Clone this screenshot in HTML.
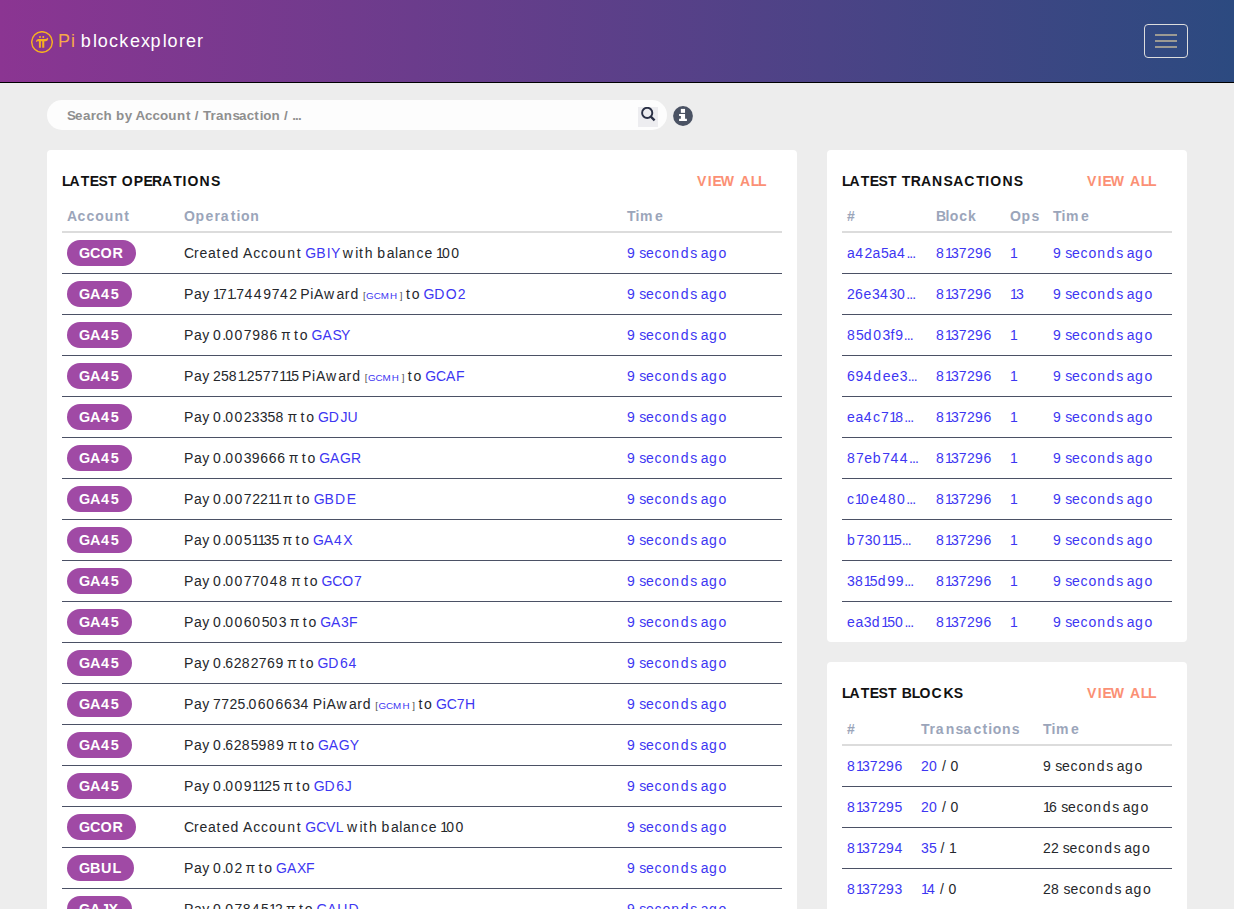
<!DOCTYPE html>
<html><head><meta charset="utf-8">
<style>
*{box-sizing:border-box;margin:0;padding:0}
html,body{width:1234px;height:909px;overflow:hidden}
body{background:#ededed;font-family:"Liberation Sans",sans-serif;color:#25272b;position:relative;font-kerning:none;letter-spacing:0}
a{color:#3d36f2;text-decoration:none}
.hdr{position:absolute;left:0;top:0;width:1234px;height:83px;background:linear-gradient(to right,#8b3592,#2c4a80);border-bottom:1px solid #000}
.logo{position:absolute;left:31px;top:31px;width:22px;height:22px}
.brand{position:absolute;left:58px;top:30px;font-size:18px;line-height:22px;white-space:nowrap}
.brand .o{color:#f7a84a}
.brand .w{color:#fff}
.burger{position:absolute;left:1144px;top:24px;width:44px;height:34px;border:1px solid #ddd;border-radius:4px}
.burger i{position:absolute;left:10px;width:22px;height:2px;background:#9c9a93}
.search{position:absolute;left:47px;top:100px;width:620px;height:30px;background:#fdfdfd;border-radius:15px}
.search .ph{position:absolute;left:20px;top:8.5px;font-size:13.4px;font-weight:700;color:#8f8f8f;line-height:14px;white-space:nowrap}
.search .sb{position:absolute;left:591px;top:7px;width:20px;height:20px;background:#ededf0}
.info{position:absolute;left:673px;top:106px;width:20px;height:20px}
.card{position:absolute;background:#fff;border-radius:4px;overflow:hidden}
.ttl{position:absolute;top:23.5px;font-size:14px;font-weight:700;color:#111;line-height:14px;white-space:nowrap}
.va{position:absolute;top:23.5px;font-size:14px;font-weight:700;color:#fb9074;line-height:14px;white-space:nowrap}
table{position:absolute;border-collapse:collapse;table-layout:fixed}
th{height:24px;text-align:left;font-size:14px;font-weight:700;color:#9ba5ba;padding:0 0 0 5px;vertical-align:top;padding-top:0;border-bottom:2px solid #dcdcdc;white-space:nowrap}
td{height:41px;padding:0 0 0 5px;font-size:14px;border-bottom:1px solid #4b5165;white-space:nowrap;vertical-align:middle}
.bd{display:inline-block;height:26px;line-height:26px;border-radius:13px;background:#a04aa5;color:#fff;font-weight:700;font-size:14.4px;padding:0 13px 0 12px}
.sm{font-size:9.8px;color:#555}
#ops td+td{word-spacing:-0.7px}#ops td+td+td{word-spacing:0}
.m1{letter-spacing:-0.1px}.m10{letter-spacing:-1.0px}.m11{letter-spacing:-1.1px}.m14{letter-spacing:-1.4px}.m18{letter-spacing:-1.8px}.m2{letter-spacing:-0.2px}.m4{letter-spacing:-0.4px}.m6{letter-spacing:-0.6px}.m7{letter-spacing:-0.7px}.m8{letter-spacing:-0.8px}.m9{letter-spacing:-0.9px}.p1{letter-spacing:0.1px}.p10{letter-spacing:1.0px}.p11{letter-spacing:1.1px}.p12{letter-spacing:1.2px}.p13{letter-spacing:1.3px}.p14{letter-spacing:1.4px}.p15{letter-spacing:1.5px}.p16{letter-spacing:1.6px}.p17{letter-spacing:1.7px}.p18{letter-spacing:1.8px}.p19{letter-spacing:1.9px}.p2{letter-spacing:0.2px}.p22{letter-spacing:2.2px}.p27{letter-spacing:2.7px}.p3{letter-spacing:0.3px}.p4{letter-spacing:0.4px}.p5{letter-spacing:0.5px}.p51{letter-spacing:5.1px}.p6{letter-spacing:0.6px}.p7{letter-spacing:0.7px}.p8{letter-spacing:0.8px}.p9{letter-spacing:0.9px}
</style></head><body>
<div class="hdr">
  <svg class="logo" viewBox="0 0 22 22"><circle cx="11" cy="11" r="10.3" fill="none" stroke="#f5b021" stroke-width="1.45"/><g fill="#f5b021"><rect x="8.05" y="5.05" width="1.9" height="1.9" rx="0.7"/><rect x="11.3" y="5.05" width="1.9" height="1.9" rx="0.7"/><path d="M4.85 10.6 Q5.3 7.9 7.3 7.9 L14.6 7.9 Q16 7.9 16.5 6.8 L17.2 6.9 Q16.9 10.1 14.6 10.2 L13.3 10.2 L13.3 16.7 L11.2 16.7 L11.2 10.2 L9.9 10.2 L9.9 16.7 L7.9 16.7 L7.9 10.2 L6.8 10.2 Q5.8 10.2 5.3 10.9 Z"/></g></svg>
  <div class="brand"><span class="o"><span class="p9">P</span><span class="p8">i</span></span> <span class="w"><span class="p22">b</span><span class="p8">l</span><span class="p13">o</span><span class="p11">c</span><span class="p18">k</span><span class="p9">e</span><span class="p6">x</span><span class="p22">p</span><span class="p8">l</span><span class="p13">o</span><span class="p12">r</span><span class="p9">e</span><span class="p12">r</span></span></div>
  <div class="burger"><i style="top:9px"></i><i style="top:15px"></i><i style="top:21px"></i></div>
</div>
<div class="search"><div class="ph"><span class="m9">S</span><span class="p5">e</span><span class="p3">a</span><span class="p1">r</span>c<span class="p7">h</span><span class="m2"> </span><span class="p7">b</span><span class="m2">y A</span>cc<span class="p1">o</span><span class="p6">u</span><span class="p7">n</span><span class="p9">t</span><span class="m2"> </span><span class="p9">/</span><span class="m2"> </span><span class="m6">T</span><span class="p1">r</span><span class="p3">a</span><span class="p7">n</span><span class="m9">s</span><span class="p3">a</span>c<span class="p9">t</span><span class="m1">i</span><span class="p1">o</span><span class="p7">n</span><span class="m2"> </span><span class="p9">/</span><span class="m2"> </span><span class="m8">...</span></div><div class="sb"><svg width="20" height="20" viewBox="0 0 20 20"><circle cx="9.2" cy="5.9" r="5.1" fill="none" stroke="#2a3045" stroke-width="1.9"/><path d="M12.8 9.6 L16.6 13.4" stroke="#2a3045" stroke-width="2.3"/></svg></div></div>
<svg class="info" viewBox="0 0 20 20"><circle cx="10" cy="10" r="9.9" fill="#4a5263"/><g fill="#fff"><rect x="7.85" y="2.9" width="4.2" height="3.95"/><path d="M6.1 8 H12.07 V12.8 H13.9 V14.9 H6.1 V12.8 H7.85 V10 H6.1 Z"/></g></svg>

<div class="card" style="left:47px;top:150px;width:750px;height:800px">
  <div class="ttl" style="left:15px"><span class="m10">L</span><span class="p10">A</span><span class="p6">T</span><span class="m8">E</span><span class="p3">S</span><span class="p6">T </span><span class="p12">O</span><span class="p3">P</span><span class="m8">E</span>R<span class="p10">A</span><span class="p6">T</span><span class="p11">I</span><span class="p12">O</span><span class="p13">N</span><span class="p3">S</span></div>
  <div class="va" style="left:650px"><span class="p14">V</span><span class="p8">I</span><span class="m11">E</span><span class="p19">W</span><span class="p2"> </span><span class="p7">A</span><span class="m14">LL</span></div>
  <table id="ops" style="left:15px;top:58px;width:720px">
<colgroup><col style="width:117px"><col style="width:443px"><col></colgroup>
<tr><th><span class="p4">A</span><span class="p11">cc</span><span class="p8">o</span><span class="p12">unt</span></th><th><span class="p6">O</span><span class="p14">p</span><span class="p13">e</span><span class="p7">r</span><span class="p22">a</span><span class="p12">t</span><span class="p5">i</span><span class="p8">o</span><span class="p12">n</span></th><th>T<span class="p5">i</span><span class="p27">m</span><span class="p13">e</span></th></tr>
<tr><td><span class="bd"><span class="m1">GC</span><span class="p9">O</span><span class="p1">R</span></span></td><td><span class="m2">C</span><span class="p10">r</span><span class="p7">e</span><span class="p5">a</span><span class="p18">t</span><span class="p7">e</span><span class="p17">d</span><span class="m2"> </span><span class="p7">A</span><span class="p9">cc</span><span class="p10">o</span><span class="p16">u</span><span class="p17">n</span><span class="p18">t</span><span class="m2"> </span><a><span class="m1">G</span><span class="p12">B</span><span class="p3">I</span><span class="m4">Y</span></a><span class="m2"> </span><span class="p22">w</span><span class="p7">i</span><span class="p18">t</span><span class="p17">h</span><span class="m2"> </span><span class="p17">b</span><span class="p5">a</span><span class="p7">l</span><span class="p5">a</span><span class="p17">n</span><span class="p9">c</span><span class="p7">e</span><span class="m2"> </span><span class="m18">1</span><span class="p15">00</span></td><td><a><span class="p7">9</span><span class="m2"> s</span><span class="p7">e</span><span class="p9">c</span><span class="p10">o</span><span class="p17">nd</span><span class="m2">s </span><span class="p5">a</span><span class="p18">g</span><span class="p10">o</span></a></td></tr>
<tr><td><span class="bd"><span class="m1">G</span><span class="p4">A</span><span class="p18">4</span><span class="p4">5</span></span></td><td><span class="p7">P</span><span class="p5">a</span><span class="p6">y</span><span class="m2"> </span><span class="m18">1</span><span class="p5">7</span><span class="m18">1</span><span class="m9">.</span><span class="p5">7</span><span class="p15">44</span><span class="p7">9</span><span class="p5">7</span><span class="p15">4</span><span class="p2">2</span><span class="m2"> </span><span class="p7">PiA</span><span class="p22">w</span><span class="p5">a</span><span class="p10">r</span><span class="p17">d</span><span class="m2"> </span><span class="sm"><span class="p4">[</span><a>G<span class="m1">C</span><span class="p12">M</span><span class="p9">H</span></a><span class="m2"> </span><span class="p4">]</span></span><span class="m2"> </span><span class="p18">t</span><span class="p10">o</span><span class="m2"> </span><a><span class="m1">G</span><span class="p15">D</span><span class="p9">O</span><span class="p2">2</span></a></td><td><a><span class="p7">9</span><span class="m2"> s</span><span class="p7">e</span><span class="p9">c</span><span class="p10">o</span><span class="p17">nd</span><span class="m2">s </span><span class="p5">a</span><span class="p18">g</span><span class="p10">o</span></a></td></tr>
<tr><td><span class="bd"><span class="m1">G</span><span class="p4">A</span><span class="p18">4</span><span class="p4">5</span></span></td><td><span class="p7">P</span><span class="p5">a</span><span class="p6">y</span><span class="m2"> </span><span class="p15">0</span><span class="m9">.</span><span class="p15">00</span><span class="p5">7</span><span class="p7">9</span><span class="p11">8</span><span class="p7">6</span><span class="m2"> </span><span class="p4">π</span><span class="m2"> </span><span class="p18">t</span><span class="p10">o</span><span class="m2"> </span><a><span class="m1">G</span><span class="p7">A</span><span class="m7">S</span><span class="m4">Y</span></a></td><td><a><span class="p7">9</span><span class="m2"> s</span><span class="p7">e</span><span class="p9">c</span><span class="p10">o</span><span class="p17">nd</span><span class="m2">s </span><span class="p5">a</span><span class="p18">g</span><span class="p10">o</span></a></td></tr>
<tr><td><span class="bd"><span class="m1">G</span><span class="p4">A</span><span class="p18">4</span><span class="p4">5</span></span></td><td><span class="p7">P</span><span class="p5">a</span><span class="p6">y</span><span class="m2"> </span><span class="p2">2</span><span class="p1">5</span><span class="p11">8</span><span class="m18">1</span><span class="m9">.</span><span class="p2">2</span><span class="p1">5</span><span class="p5">77</span><span class="m18">11</span><span class="p1">5</span><span class="m2"> </span><span class="p7">PiA</span><span class="p22">w</span><span class="p5">a</span><span class="p10">r</span><span class="p17">d</span><span class="m2"> </span><span class="sm"><span class="p4">[</span><a>G<span class="m1">C</span><span class="p12">M</span><span class="p9">H</span></a><span class="m2"> </span><span class="p4">]</span></span><span class="m2"> </span><span class="p18">t</span><span class="p10">o</span><span class="m2"> </span><a><span class="m1">G</span><span class="m2">C</span><span class="p7">A</span><span class="p3">F</span></a></td><td><a><span class="p7">9</span><span class="m2"> s</span><span class="p7">e</span><span class="p9">c</span><span class="p10">o</span><span class="p17">nd</span><span class="m2">s </span><span class="p5">a</span><span class="p18">g</span><span class="p10">o</span></a></td></tr>
<tr><td><span class="bd"><span class="m1">G</span><span class="p4">A</span><span class="p18">4</span><span class="p4">5</span></span></td><td><span class="p7">P</span><span class="p5">a</span><span class="p6">y</span><span class="m2"> </span><span class="p15">0</span><span class="m9">.</span><span class="p15">00</span><span class="p2">2</span><span class="p1">335</span><span class="p11">8</span><span class="m2"> </span><span class="p4">π</span><span class="m2"> </span><span class="p18">t</span><span class="p10">o</span><span class="m2"> </span><a><span class="m1">G</span><span class="p15">D</span>J<span class="p10">U</span></a></td><td><a><span class="p7">9</span><span class="m2"> s</span><span class="p7">e</span><span class="p9">c</span><span class="p10">o</span><span class="p17">nd</span><span class="m2">s </span><span class="p5">a</span><span class="p18">g</span><span class="p10">o</span></a></td></tr>
<tr><td><span class="bd"><span class="m1">G</span><span class="p4">A</span><span class="p18">4</span><span class="p4">5</span></span></td><td><span class="p7">P</span><span class="p5">a</span><span class="p6">y</span><span class="m2"> </span><span class="p15">0</span><span class="m9">.</span><span class="p15">00</span><span class="p1">3</span><span class="p7">9666</span><span class="m2"> </span><span class="p4">π</span><span class="m2"> </span><span class="p18">t</span><span class="p10">o</span><span class="m2"> </span><a><span class="m1">G</span><span class="p7">A</span><span class="m1">G</span>R</a></td><td><a><span class="p7">9</span><span class="m2"> s</span><span class="p7">e</span><span class="p9">c</span><span class="p10">o</span><span class="p17">nd</span><span class="m2">s </span><span class="p5">a</span><span class="p18">g</span><span class="p10">o</span></a></td></tr>
<tr><td><span class="bd"><span class="m1">G</span><span class="p4">A</span><span class="p18">4</span><span class="p4">5</span></span></td><td><span class="p7">P</span><span class="p5">a</span><span class="p6">y</span><span class="m2"> </span><span class="p15">0</span><span class="m9">.</span><span class="p15">00</span><span class="p5">7</span><span class="p2">22</span><span class="m18">11</span><span class="m2"> </span><span class="p4">π</span><span class="m2"> </span><span class="p18">t</span><span class="p10">o</span><span class="m2"> </span><a><span class="m1">G</span><span class="p12">B</span><span class="p15">D</span>E</a></td><td><a><span class="p7">9</span><span class="m2"> s</span><span class="p7">e</span><span class="p9">c</span><span class="p10">o</span><span class="p17">nd</span><span class="m2">s </span><span class="p5">a</span><span class="p18">g</span><span class="p10">o</span></a></td></tr>
<tr><td><span class="bd"><span class="m1">G</span><span class="p4">A</span><span class="p18">4</span><span class="p4">5</span></span></td><td><span class="p7">P</span><span class="p5">a</span><span class="p6">y</span><span class="m2"> </span><span class="p15">0</span><span class="m9">.</span><span class="p15">00</span><span class="p1">5</span><span class="m18">11</span><span class="p1">35</span><span class="m2"> </span><span class="p4">π</span><span class="m2"> </span><span class="p18">t</span><span class="p10">o</span><span class="m2"> </span><a><span class="m1">G</span><span class="p7">A</span><span class="p15">4</span><span class="m2">X</span></a></td><td><a><span class="p7">9</span><span class="m2"> s</span><span class="p7">e</span><span class="p9">c</span><span class="p10">o</span><span class="p17">nd</span><span class="m2">s </span><span class="p5">a</span><span class="p18">g</span><span class="p10">o</span></a></td></tr>
<tr><td><span class="bd"><span class="m1">G</span><span class="p4">A</span><span class="p18">4</span><span class="p4">5</span></span></td><td><span class="p7">P</span><span class="p5">a</span><span class="p6">y</span><span class="m2"> </span><span class="p15">0</span><span class="m9">.</span><span class="p15">00</span><span class="p5">77</span><span class="p15">04</span><span class="p11">8</span><span class="m2"> </span><span class="p4">π</span><span class="m2"> </span><span class="p18">t</span><span class="p10">o</span><span class="m2"> </span><a><span class="m1">G</span><span class="m2">C</span><span class="p9">O</span><span class="p5">7</span></a></td><td><a><span class="p7">9</span><span class="m2"> s</span><span class="p7">e</span><span class="p9">c</span><span class="p10">o</span><span class="p17">nd</span><span class="m2">s </span><span class="p5">a</span><span class="p18">g</span><span class="p10">o</span></a></td></tr>
<tr><td><span class="bd"><span class="m1">G</span><span class="p4">A</span><span class="p18">4</span><span class="p4">5</span></span></td><td><span class="p7">P</span><span class="p5">a</span><span class="p6">y</span><span class="m2"> </span><span class="p15">0</span><span class="m9">.</span><span class="p15">00</span><span class="p7">6</span><span class="p15">0</span><span class="p1">5</span><span class="p15">0</span><span class="p1">3</span><span class="m2"> </span><span class="p4">π</span><span class="m2"> </span><span class="p18">t</span><span class="p10">o</span><span class="m2"> </span><a><span class="m1">G</span><span class="p7">A</span><span class="p1">3</span><span class="p3">F</span></a></td><td><a><span class="p7">9</span><span class="m2"> s</span><span class="p7">e</span><span class="p9">c</span><span class="p10">o</span><span class="p17">nd</span><span class="m2">s </span><span class="p5">a</span><span class="p18">g</span><span class="p10">o</span></a></td></tr>
<tr><td><span class="bd"><span class="m1">G</span><span class="p4">A</span><span class="p18">4</span><span class="p4">5</span></span></td><td><span class="p7">P</span><span class="p5">a</span><span class="p6">y</span><span class="m2"> </span><span class="p15">0</span><span class="m9">.</span><span class="p7">6</span><span class="p2">2</span><span class="p11">8</span><span class="p2">2</span><span class="p5">7</span><span class="p7">69</span><span class="m2"> </span><span class="p4">π</span><span class="m2"> </span><span class="p18">t</span><span class="p10">o</span><span class="m2"> </span><a><span class="m1">G</span><span class="p15">D</span><span class="p7">6</span><span class="p15">4</span></a></td><td><a><span class="p7">9</span><span class="m2"> s</span><span class="p7">e</span><span class="p9">c</span><span class="p10">o</span><span class="p17">nd</span><span class="m2">s </span><span class="p5">a</span><span class="p18">g</span><span class="p10">o</span></a></td></tr>
<tr><td><span class="bd"><span class="m1">G</span><span class="p4">A</span><span class="p18">4</span><span class="p4">5</span></span></td><td><span class="p7">P</span><span class="p5">a</span><span class="p6">y</span><span class="m2"> </span><span class="p5">77</span><span class="p2">2</span><span class="p1">5</span><span class="m9">.</span><span class="p15">0</span><span class="p7">6</span><span class="p15">0</span><span class="p7">66</span><span class="p1">3</span><span class="p15">4</span><span class="m2"> </span><span class="p7">PiA</span><span class="p22">w</span><span class="p5">a</span><span class="p10">r</span><span class="p17">d</span><span class="m2"> </span><span class="sm"><span class="p4">[</span><a>G<span class="m1">C</span><span class="p12">M</span><span class="p9">H</span></a><span class="m2"> </span><span class="p4">]</span></span><span class="m2"> </span><span class="p18">t</span><span class="p10">o</span><span class="m2"> </span><a><span class="m1">G</span><span class="m2">C</span><span class="p5">7</span><span class="p13">H</span></a></td><td><a><span class="p7">9</span><span class="m2"> s</span><span class="p7">e</span><span class="p9">c</span><span class="p10">o</span><span class="p17">nd</span><span class="m2">s </span><span class="p5">a</span><span class="p18">g</span><span class="p10">o</span></a></td></tr>
<tr><td><span class="bd"><span class="m1">G</span><span class="p4">A</span><span class="p18">4</span><span class="p4">5</span></span></td><td><span class="p7">P</span><span class="p5">a</span><span class="p6">y</span><span class="m2"> </span><span class="p15">0</span><span class="m9">.</span><span class="p7">6</span><span class="p2">2</span><span class="p11">8</span><span class="p1">5</span><span class="p7">9</span><span class="p11">8</span><span class="p7">9</span><span class="m2"> </span><span class="p4">π</span><span class="m2"> </span><span class="p18">t</span><span class="p10">o</span><span class="m2"> </span><a><span class="m1">G</span><span class="p7">A</span><span class="m1">G</span><span class="m4">Y</span></a></td><td><a><span class="p7">9</span><span class="m2"> s</span><span class="p7">e</span><span class="p9">c</span><span class="p10">o</span><span class="p17">nd</span><span class="m2">s </span><span class="p5">a</span><span class="p18">g</span><span class="p10">o</span></a></td></tr>
<tr><td><span class="bd"><span class="m1">G</span><span class="p4">A</span><span class="p18">4</span><span class="p4">5</span></span></td><td><span class="p7">P</span><span class="p5">a</span><span class="p6">y</span><span class="m2"> </span><span class="p15">0</span><span class="m9">.</span><span class="p15">00</span><span class="p7">9</span><span class="m18">11</span><span class="p2">2</span><span class="p1">5</span><span class="m2"> </span><span class="p4">π</span><span class="m2"> </span><span class="p18">t</span><span class="p10">o</span><span class="m2"> </span><a><span class="m1">G</span><span class="p15">D</span><span class="p7">6</span>J</a></td><td><a><span class="p7">9</span><span class="m2"> s</span><span class="p7">e</span><span class="p9">c</span><span class="p10">o</span><span class="p17">nd</span><span class="m2">s </span><span class="p5">a</span><span class="p18">g</span><span class="p10">o</span></a></td></tr>
<tr><td><span class="bd"><span class="m1">GC</span><span class="p9">O</span><span class="p1">R</span></span></td><td><span class="m2">C</span><span class="p10">r</span><span class="p7">e</span><span class="p5">a</span><span class="p18">t</span><span class="p7">e</span><span class="p17">d</span><span class="m2"> </span><span class="p7">A</span><span class="p9">cc</span><span class="p10">o</span><span class="p16">u</span><span class="p17">n</span><span class="p18">t</span><span class="m2"> </span><a><span class="m1">G</span><span class="m2">C</span><span class="p4">V</span><span class="p5">L</span></a><span class="m2"> </span><span class="p22">w</span><span class="p7">i</span><span class="p18">t</span><span class="p17">h</span><span class="m2"> </span><span class="p17">b</span><span class="p5">a</span><span class="p7">l</span><span class="p5">a</span><span class="p17">n</span><span class="p9">c</span><span class="p7">e</span><span class="m2"> </span><span class="m18">1</span><span class="p15">00</span></td><td><a><span class="p7">9</span><span class="m2"> s</span><span class="p7">e</span><span class="p9">c</span><span class="p10">o</span><span class="p17">nd</span><span class="m2">s </span><span class="p5">a</span><span class="p18">g</span><span class="p10">o</span></a></td></tr>
<tr><td><span class="bd"><span class="m1">G</span><span class="p6">B</span><span class="p10">U</span><span class="m2">L</span></span></td><td><span class="p7">P</span><span class="p5">a</span><span class="p6">y</span><span class="m2"> </span><span class="p15">0</span><span class="m9">.</span><span class="p15">0</span><span class="p2">2</span><span class="m2"> </span><span class="p4">π</span><span class="m2"> </span><span class="p18">t</span><span class="p10">o</span><span class="m2"> </span><a><span class="m1">G</span><span class="p7">A</span><span class="m2">X</span><span class="p3">F</span></a></td><td><a><span class="p7">9</span><span class="m2"> s</span><span class="p7">e</span><span class="p9">c</span><span class="p10">o</span><span class="p17">nd</span><span class="m2">s </span><span class="p5">a</span><span class="p18">g</span><span class="p10">o</span></a></td></tr>
<tr><td><span class="bd"><span class="m1">G</span><span class="p4">A</span><span class="m4">J</span><span class="p4">X</span></span></td><td><span class="p7">P</span><span class="p5">a</span><span class="p6">y</span><span class="m2"> </span><span class="p15">0</span><span class="m9">.</span><span class="p15">0</span><span class="p5">7</span><span class="p11">8</span><span class="p15">4</span><span class="p1">5</span><span class="m18">1</span><span class="p2">2</span><span class="m2"> </span><span class="p4">π</span><span class="m2"> </span><span class="p18">t</span><span class="p10">o</span><span class="m2"> </span><a><span class="m1">G</span><span class="p7">A</span><span class="p10">U</span><span class="p15">D</span></a></td><td><a><span class="p7">9</span><span class="m2"> s</span><span class="p7">e</span><span class="p9">c</span><span class="p10">o</span><span class="p17">nd</span><span class="m2">s </span><span class="p5">a</span><span class="p18">g</span><span class="p10">o</span></a></td></tr>
  </table>
</div>

<div class="card" style="left:827px;top:150px;width:360px;height:492px">
  <div class="ttl" style="left:15px"><span class="m10">L</span><span class="p10">A</span><span class="p6">T</span><span class="m8">E</span><span class="p3">S</span><span class="p6">T T</span>R<span class="p10">A</span><span class="p13">N</span><span class="p3">S</span><span class="p10">A</span><span class="p18">C</span><span class="p6">T</span><span class="p11">I</span><span class="p12">O</span><span class="p13">N</span><span class="p3">S</span></div>
  <div class="va" style="left:260px"><span class="p14">V</span><span class="p8">I</span><span class="m11">E</span><span class="p19">W</span><span class="p2"> </span><span class="p7">A</span><span class="m14">LL</span></div>
  <table id="txs" style="left:15px;top:58px;width:330px">
<colgroup><col style="width:89px"><col style="width:74px"><col style="width:43px"><col></colgroup>
<tr><th><span class="p51">#</span></th><th><span class="m7">B</span><span class="p5">l</span><span class="p8">o</span><span class="p11">c</span><span class="p8">k</span></th><th><span class="p6">O</span><span class="p14">p</span><span class="p3">s</span></th><th>T<span class="p5">i</span><span class="p27">m</span><span class="p13">e</span></th></tr>
<tr><td><a><span class="p5">a</span><span class="p15">4</span><span class="p2">2</span><span class="p5">a</span><span class="p1">5</span><span class="p5">a</span><span class="p15">4</span><span class="m9">...</span></a></td><td><a><span class="p11">8</span><span class="m18">1</span><span class="p1">3</span><span class="p5">7</span><span class="p2">2</span><span class="p7">96</span></a></td><td><a><span class="m18">1</span></a></td><td><a><span class="p7">9</span><span class="m2"> s</span><span class="p7">e</span><span class="p9">c</span><span class="p10">o</span><span class="p17">nd</span><span class="m2">s </span><span class="p5">a</span><span class="p18">g</span><span class="p10">o</span></a></td></tr>
<tr><td><a><span class="p2">2</span><span class="p7">6e</span><span class="p1">3</span><span class="p15">4</span><span class="p1">3</span><span class="p15">0</span><span class="m9">...</span></a></td><td><a><span class="p11">8</span><span class="m18">1</span><span class="p1">3</span><span class="p5">7</span><span class="p2">2</span><span class="p7">96</span></a></td><td><a><span class="m18">1</span><span class="p1">3</span></a></td><td><a><span class="p7">9</span><span class="m2"> s</span><span class="p7">e</span><span class="p9">c</span><span class="p10">o</span><span class="p17">nd</span><span class="m2">s </span><span class="p5">a</span><span class="p18">g</span><span class="p10">o</span></a></td></tr>
<tr><td><a><span class="p11">8</span><span class="p1">5</span><span class="p17">d</span><span class="p15">0</span><span class="p1">3</span><span class="p9">f</span><span class="p7">9</span><span class="m9">...</span></a></td><td><a><span class="p11">8</span><span class="m18">1</span><span class="p1">3</span><span class="p5">7</span><span class="p2">2</span><span class="p7">96</span></a></td><td><a><span class="m18">1</span></a></td><td><a><span class="p7">9</span><span class="m2"> s</span><span class="p7">e</span><span class="p9">c</span><span class="p10">o</span><span class="p17">nd</span><span class="m2">s </span><span class="p5">a</span><span class="p18">g</span><span class="p10">o</span></a></td></tr>
<tr><td><a><span class="p7">69</span><span class="p15">4</span><span class="p17">d</span><span class="p7">ee</span><span class="p1">3</span><span class="m9">...</span></a></td><td><a><span class="p11">8</span><span class="m18">1</span><span class="p1">3</span><span class="p5">7</span><span class="p2">2</span><span class="p7">96</span></a></td><td><a><span class="m18">1</span></a></td><td><a><span class="p7">9</span><span class="m2"> s</span><span class="p7">e</span><span class="p9">c</span><span class="p10">o</span><span class="p17">nd</span><span class="m2">s </span><span class="p5">a</span><span class="p18">g</span><span class="p10">o</span></a></td></tr>
<tr><td><a><span class="p7">e</span><span class="p5">a</span><span class="p15">4</span><span class="p9">c</span><span class="p5">7</span><span class="m18">1</span><span class="p11">8</span><span class="m9">...</span></a></td><td><a><span class="p11">8</span><span class="m18">1</span><span class="p1">3</span><span class="p5">7</span><span class="p2">2</span><span class="p7">96</span></a></td><td><a><span class="m18">1</span></a></td><td><a><span class="p7">9</span><span class="m2"> s</span><span class="p7">e</span><span class="p9">c</span><span class="p10">o</span><span class="p17">nd</span><span class="m2">s </span><span class="p5">a</span><span class="p18">g</span><span class="p10">o</span></a></td></tr>
<tr><td><a><span class="p11">8</span><span class="p5">7</span><span class="p7">e</span><span class="p17">b</span><span class="p5">7</span><span class="p15">44</span><span class="m9">...</span></a></td><td><a><span class="p11">8</span><span class="m18">1</span><span class="p1">3</span><span class="p5">7</span><span class="p2">2</span><span class="p7">96</span></a></td><td><a><span class="m18">1</span></a></td><td><a><span class="p7">9</span><span class="m2"> s</span><span class="p7">e</span><span class="p9">c</span><span class="p10">o</span><span class="p17">nd</span><span class="m2">s </span><span class="p5">a</span><span class="p18">g</span><span class="p10">o</span></a></td></tr>
<tr><td><a><span class="p9">c</span><span class="m18">1</span><span class="p15">0</span><span class="p7">e</span><span class="p15">4</span><span class="p11">8</span><span class="p15">0</span><span class="m9">...</span></a></td><td><a><span class="p11">8</span><span class="m18">1</span><span class="p1">3</span><span class="p5">7</span><span class="p2">2</span><span class="p7">96</span></a></td><td><a><span class="m18">1</span></a></td><td><a><span class="p7">9</span><span class="m2"> s</span><span class="p7">e</span><span class="p9">c</span><span class="p10">o</span><span class="p17">nd</span><span class="m2">s </span><span class="p5">a</span><span class="p18">g</span><span class="p10">o</span></a></td></tr>
<tr><td><a><span class="p17">b</span><span class="p5">7</span><span class="p1">3</span><span class="p15">0</span><span class="m18">11</span><span class="p1">5</span><span class="m9">...</span></a></td><td><a><span class="p11">8</span><span class="m18">1</span><span class="p1">3</span><span class="p5">7</span><span class="p2">2</span><span class="p7">96</span></a></td><td><a><span class="m18">1</span></a></td><td><a><span class="p7">9</span><span class="m2"> s</span><span class="p7">e</span><span class="p9">c</span><span class="p10">o</span><span class="p17">nd</span><span class="m2">s </span><span class="p5">a</span><span class="p18">g</span><span class="p10">o</span></a></td></tr>
<tr><td><a><span class="p1">3</span><span class="p11">8</span><span class="m18">1</span><span class="p1">5</span><span class="p17">d</span><span class="p7">99</span><span class="m9">...</span></a></td><td><a><span class="p11">8</span><span class="m18">1</span><span class="p1">3</span><span class="p5">7</span><span class="p2">2</span><span class="p7">96</span></a></td><td><a><span class="m18">1</span></a></td><td><a><span class="p7">9</span><span class="m2"> s</span><span class="p7">e</span><span class="p9">c</span><span class="p10">o</span><span class="p17">nd</span><span class="m2">s </span><span class="p5">a</span><span class="p18">g</span><span class="p10">o</span></a></td></tr>
<tr><td><a><span class="p7">e</span><span class="p5">a</span><span class="p1">3</span><span class="p17">d</span><span class="m18">1</span><span class="p1">5</span><span class="p15">0</span><span class="m9">...</span></a></td><td><a><span class="p11">8</span><span class="m18">1</span><span class="p1">3</span><span class="p5">7</span><span class="p2">2</span><span class="p7">96</span></a></td><td><a><span class="m18">1</span></a></td><td><a><span class="p7">9</span><span class="m2"> s</span><span class="p7">e</span><span class="p9">c</span><span class="p10">o</span><span class="p17">nd</span><span class="m2">s </span><span class="p5">a</span><span class="p18">g</span><span class="p10">o</span></a></td></tr>
  </table>
</div>

<div class="card" style="left:827px;top:662px;width:360px;height:300px">
  <div class="ttl" style="left:15px"><span class="m10">L</span><span class="p10">A</span><span class="p6">T</span><span class="m8">E</span><span class="p3">S</span><span class="p6">T </span>B<span class="m10">L</span><span class="p12">O</span><span class="p18">C</span><span class="p3">KS</span></div>
  <div class="va" style="left:260px"><span class="p14">V</span><span class="p8">I</span><span class="m11">E</span><span class="p19">W</span><span class="p2"> </span><span class="p7">A</span><span class="m14">LL</span></div>
  <table id="blks" style="left:15px;top:59px;width:330px">
<colgroup><col style="width:74px"><col style="width:122px"><col></colgroup>
<tr><th><span class="p51">#</span></th><th>T<span class="p7">r</span><span class="p22">a</span><span class="p12">n</span><span class="p3">s</span><span class="p22">a</span><span class="p11">c</span><span class="p12">t</span><span class="p5">i</span><span class="p8">o</span><span class="p12">n</span><span class="p3">s</span></th><th>T<span class="p5">i</span><span class="p27">m</span><span class="p13">e</span></th></tr>
<tr><td><a><span class="p11">8</span><span class="m18">1</span><span class="p1">3</span><span class="p5">7</span><span class="p2">2</span><span class="p7">96</span></a></td><td><a><span class="p2">2</span><span class="p15">0</span></a><span class="m2"> </span><span class="p8">/</span><span class="m2"> </span><span class="p15">0</span></td><td><span class="p7">9</span><span class="m2"> s</span><span class="p7">e</span><span class="p9">c</span><span class="p10">o</span><span class="p17">nd</span><span class="m2">s </span><span class="p5">a</span><span class="p18">g</span><span class="p10">o</span></td></tr>
<tr><td><a><span class="p11">8</span><span class="m18">1</span><span class="p1">3</span><span class="p5">7</span><span class="p2">2</span><span class="p7">9</span><span class="p1">5</span></a></td><td><a><span class="p2">2</span><span class="p15">0</span></a><span class="m2"> </span><span class="p8">/</span><span class="m2"> </span><span class="p15">0</span></td><td><span class="m18">1</span><span class="p7">6</span><span class="m2"> s</span><span class="p7">e</span><span class="p9">c</span><span class="p10">o</span><span class="p17">nd</span><span class="m2">s </span><span class="p5">a</span><span class="p18">g</span><span class="p10">o</span></td></tr>
<tr><td><a><span class="p11">8</span><span class="m18">1</span><span class="p1">3</span><span class="p5">7</span><span class="p2">2</span><span class="p7">9</span><span class="p15">4</span></a></td><td><a><span class="p1">35</span></a><span class="m2"> </span><span class="p8">/</span><span class="m2"> </span><span class="m18">1</span></td><td><span class="p2">22</span><span class="m2"> s</span><span class="p7">e</span><span class="p9">c</span><span class="p10">o</span><span class="p17">nd</span><span class="m2">s </span><span class="p5">a</span><span class="p18">g</span><span class="p10">o</span></td></tr>
<tr><td><a><span class="p11">8</span><span class="m18">1</span><span class="p1">3</span><span class="p5">7</span><span class="p2">2</span><span class="p7">9</span><span class="p1">3</span></a></td><td><a><span class="m18">1</span><span class="p15">4</span></a><span class="m2"> </span><span class="p8">/</span><span class="m2"> </span><span class="p15">0</span></td><td><span class="p2">2</span><span class="p11">8</span><span class="m2"> s</span><span class="p7">e</span><span class="p9">c</span><span class="p10">o</span><span class="p17">nd</span><span class="m2">s </span><span class="p5">a</span><span class="p18">g</span><span class="p10">o</span></td></tr>
  </table>
</div>
</body></html>
